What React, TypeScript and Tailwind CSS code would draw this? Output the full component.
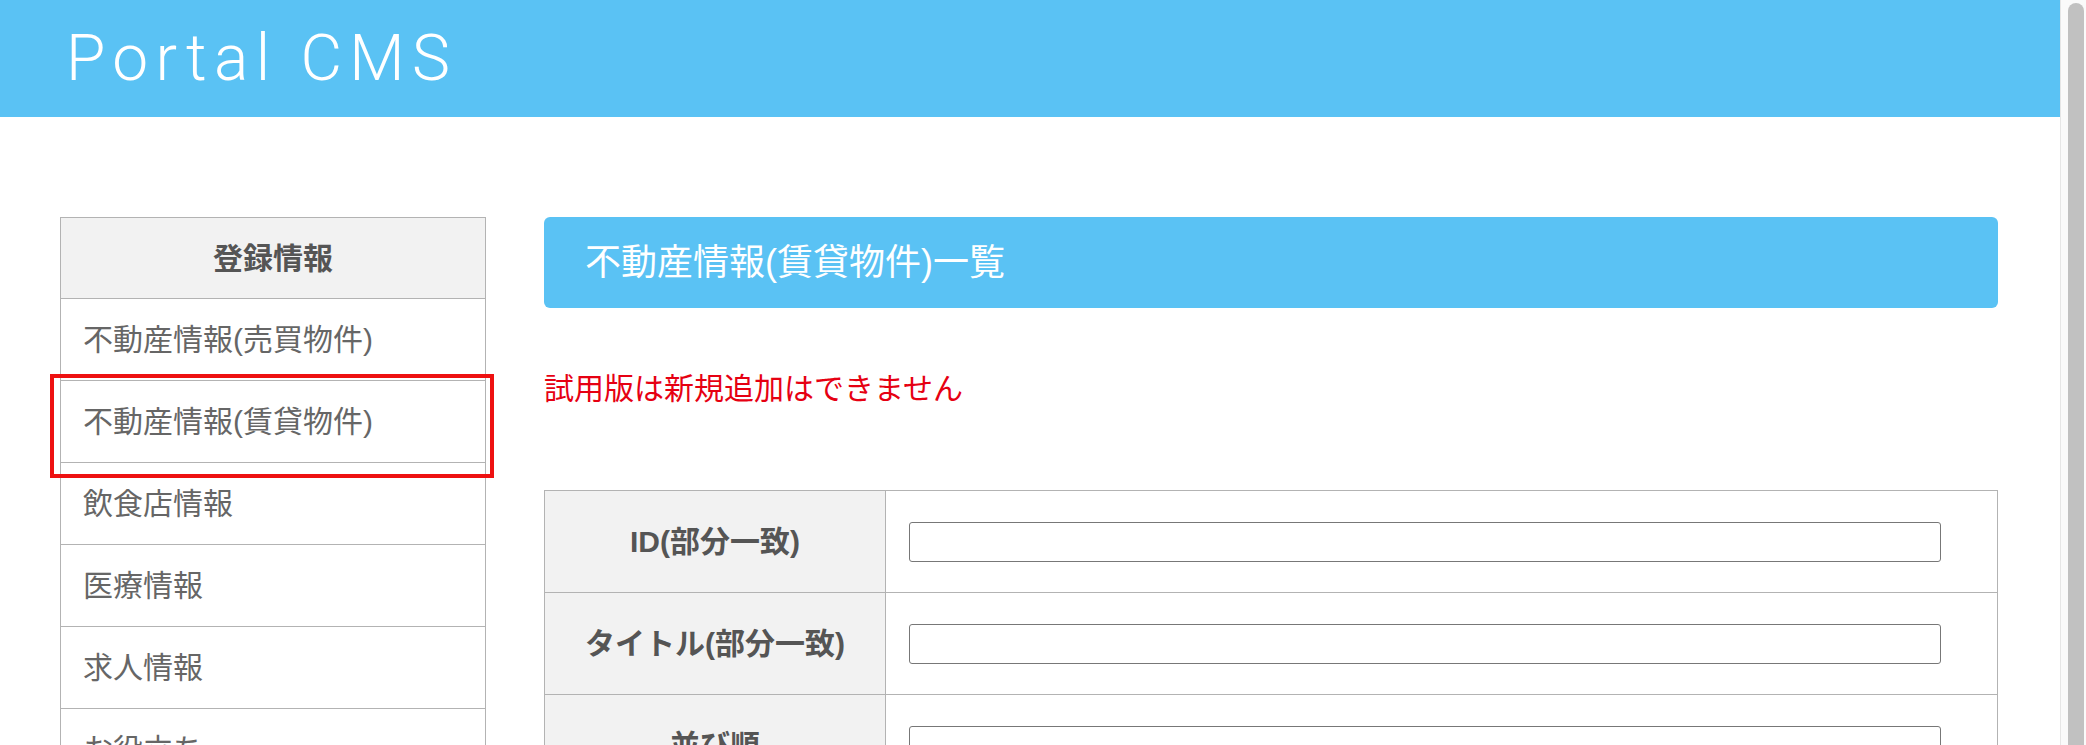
import React from "react";

const JP = '"Liberation Sans", "Noto Sans CJK JP", sans-serif';

const menu = [
  "不動産情報(売買物件)",
  "不動産情報(賃貸物件)",
  "飲食店情報",
  "医療情報",
  "求人情報",
  "お役立ち",
];

const fields = ["ID(部分一致)", "タイトル(部分一致)", "並び順"];

export default function App() {
  return (
    <div className="flex h-[745px] w-[2086px] overflow-hidden bg-white" style={{ fontFamily: JP }}>
      <div className="flex w-[2060px] flex-col">
        <header className="flex h-[117px] shrink-0 items-center bg-[#5ac2f4] pl-[66px]">
          <span
            className="text-[64px] font-light leading-none tracking-[0.115em] text-white"
            style={{ fontFamily: 'Roboto, "Liberation Sans", sans-serif' }}
          >
            Portal CMS
          </span>
        </header>

        <div className="flex pl-[60px] pt-[100px]">
          <aside className="relative w-[426px] shrink-0 border border-[#b3b3b3]">
            <div className="flex h-[81px] items-center justify-center border-b border-[#b3b3b3] bg-[#f2f2f2] text-[30px] font-bold text-[#555]">
              登録情報
            </div>
            {menu.map((m) => (
              <div
                key={m}
                className="flex h-[82px] items-center border-b border-[#b3b3b3] pl-[22px] text-[30px] text-[#666]"
              >
                {m}
              </div>
            ))}
            <div className="pointer-events-none absolute left-[-11px] top-[156px] h-[104px] w-[444px] border-[4px] border-[#ee1111]" />
          </aside>

          <main className="ml-[58px] w-[1454px] shrink-0">
            <div className="flex h-[91px] items-center rounded-[6px] bg-[#5ac2f4] pl-[41px] text-[36px] text-white">
              不動産情報(賃貸物件)一覧
            </div>

            <p className="mt-[58px] text-[30px] leading-[45px] text-[#e60012]">試用版は新規追加はできません</p>

            <div className="mt-[79px] border-l border-r border-t border-[#b3b3b3]">
              {fields.map((f) => (
                <div key={f} className="flex h-[102px] border-b border-[#b3b3b3]">
                  <div className="flex w-[341px] shrink-0 items-center justify-center border-r border-[#b3b3b3] bg-[#f2f2f2] text-[30px] font-bold text-[#555]">
                    {f}
                  </div>
                  <div className="flex flex-1 items-center pl-[23px] pr-[56px]">
                    <div className="h-[40px] w-full rounded-[3px] border border-[#777]" />
                  </div>
                </div>
              ))}
            </div>
          </main>
        </div>
      </div>

      <div className="flex w-[26px] shrink-0 border-l border-[#e6e6e6] bg-[#fafafa] pl-[7px] pt-[3px]">
        <div className="h-[900px] w-[16px] rounded-full bg-[#c1c1c1]" />
      </div>
    </div>
  );
}
